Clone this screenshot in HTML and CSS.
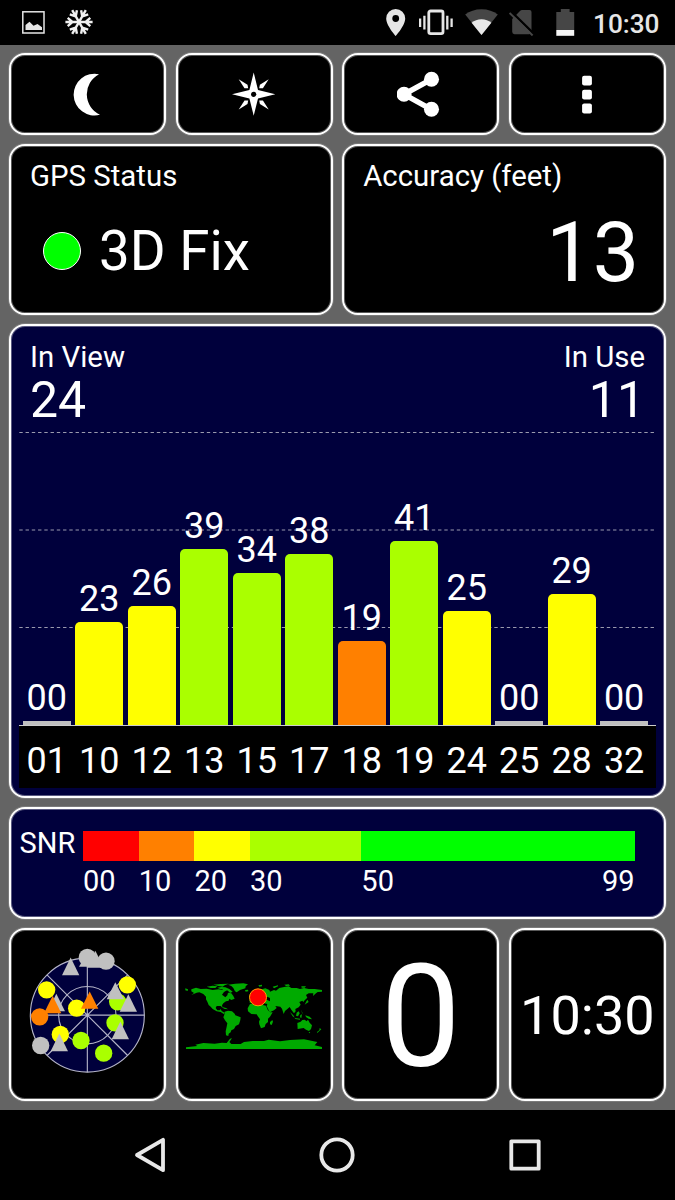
FILE: index.html
```html
<!DOCTYPE html>
<html lang="en">
<head>
    <meta charset="UTF-8">
    <meta name="viewport" content="width=device-width, initial-scale=1.0">
    <title>GPS Status</title>
    <link rel="stylesheet" href="styles.css">
</head>
<body>
    <header class="statusbar">
        <svg class="icon picture" width="23" height="23" viewBox="0 0 23 23">
            <rect x="0.8" y="0.8" width="21.2" height="21.2" fill="none" stroke="#e6e6e6" stroke-width="1.5"/>
            <path d="M3.5 19V14L7.5 10.8L11.5 14.8L15.5 13L20 16.3V19Z" fill="#e6e6e6"/>
        </svg>
        <svg class="icon snow" width="28" height="26" viewBox="-14 -13 28 26">
            <g fill="none" stroke="#f0f0f0" stroke-width="2.4">
                <path d="M-13.6 0H13.6M-11.3 -4.1L-6.5 0L-11.3 4.1M11.3 -4.1L6.5 0L11.3 4.1"/>
                <path transform="rotate(60)" d="M-13.6 0H13.6M-11.3 -4.1L-6.5 0L-11.3 4.1M11.3 -4.1L6.5 0L11.3 4.1"/>
                <path transform="rotate(120)" d="M-13.6 0H13.6M-11.3 -4.1L-6.5 0L-11.3 4.1M11.3 -4.1L6.5 0L11.3 4.1"/>
            </g>
        </svg>
        <svg class="icon pin" width="20" height="27" viewBox="0 0 20 27">
            <path d="M9.7 0A9.5 9.5 0 0 0 0.2 9.5C0.2 16.5 9.7 27 9.7 27S19.2 16.5 19.2 9.5A9.5 9.5 0 0 0 9.7 0ZM9.7 6.1A3.4 3.4 0 1 1 9.7 12.9A3.4 3.4 0 0 1 9.7 6.1Z" fill="#e6e6e6" fill-rule="evenodd"/>
        </svg>
        <svg class="icon vibrate" width="34" height="27" viewBox="0 0 34 27">
            <rect x="9.8" y="2" width="14.2" height="22.6" rx="1.8" fill="none" stroke="#e6e6e6" stroke-width="2.8"/>
            <path d="M1.1 9.5V18M5.4 6.7V20.5M28.3 6.7V20.5M32.6 9.5V18" stroke="#e6e6e6" stroke-width="2.3"/>
        </svg>
        <svg class="icon wifi" width="33" height="26" viewBox="0 0 33 26">
            <path d="M16.5 26L0.2 5.6C4.5 2.1 10 0.2 16.5 0.2S28.5 2.1 32.8 5.6Z" fill="#464646"/>
            <path d="M16.5 26L6.6 13.7C9.4 11.5 12.5 10.3 16.5 10.3S23.6 11.5 26.4 13.7Z" fill="#e8e8e8"/>
        </svg>
        <svg class="icon sim" width="26" height="27" viewBox="0 0 26 27">
            <path d="M9.5 3.5L11 1.9Q12 1 13 1H20.5Q22.5 1 22.5 3V22.8Q22.5 25.2 20.2 25.2H5.5Q3.2 25.2 3.2 22.8V10Z" fill="#464646"/>
            <path d="M2.2 2.6L24.9 24.8" stroke="#000" stroke-width="2.4"/>
            <path d="M0.6 3.9L23.6 26.4" stroke="#464646" stroke-width="2"/>
        </svg>
        <svg class="icon battery" width="19" height="27" viewBox="0 0 19 27">
            <path d="M0.3 3H4.8V0H13.6V3H18.2V21H0.3Z" fill="#464646"/>
            <rect x="0.3" y="21" width="17.9" height="5.8" fill="#f4f4f4"/>
        </svg>
        <span class="clock">10:30</span>
    </header>

    <main class="dashboard">
        <button class="card tool">
            <svg width="48" height="48" viewBox="0 0 48 48">
                <path d="M35 4.2A20.9 20.9 0 1 0 36 44.8A22.6 22.6 0 0 1 35 4.2Z" fill="#fff"/>
            </svg>
        </button>
        <button class="card tool">
            <svg width="48" height="48" viewBox="-24 -24 48 48">
                <g fill="#fff">
                    <path d="M-0.3 -21.5L4 -4L21.3 0.3L4 4.6L-0.3 21.8L-4.6 4.6L-22 0.3L-4.6 -4Z"/>
                    <path d="M-15.3 -14.8L-6.5 -9.3L-5.8 -5.8L-9.5 -5.8Z"/>
                    <path d="M14.7 -14.8L5.9 -9.3L5.2 -5.8L8.9 -5.8Z"/>
                    <path d="M-15.3 15.4L-6.5 9.9L-5.8 6.4L-9.5 6.4Z"/>
                    <path d="M14.7 15.4L5.9 9.9L5.2 6.4L8.9 6.4Z"/>
                </g>
                <circle cx="-0.3" cy="0.3" r="2.6" fill="#000"/>
            </svg>
        </button>
        <button class="card tool">
            <svg width="48" height="48" viewBox="0 0 48 48">
                <path d="M34.3 9.3L7 24.3L34.3 39.3" fill="none" stroke="#fff" stroke-width="5.4"/>
                <circle cx="7" cy="24.3" r="7.5" fill="#fff"/>
                <circle cx="34.5" cy="9.3" r="7.5" fill="#fff"/>
                <circle cx="34.5" cy="39.3" r="7.5" fill="#fff"/>
            </svg>
        </button>
        <button class="card tool">
            <svg width="48" height="48" viewBox="0 0 48 48">
                <g fill="#fff">
                    <rect x="19.1" y="5.8" width="9.8" height="9.8" rx="2"/>
                    <rect x="19.1" y="19.7" width="9.8" height="9.8" rx="2"/>
                    <rect x="19.1" y="33.6" width="9.8" height="9.8" rx="2"/>
                </g>
            </svg>
        </button>

        <section class="card half">
            <div class="label">GPS Status</div>
            <div class="fix"><span class="led"></span>3D Fix</div>
        </section>
        <section class="card half">
            <div class="label">Accuracy (feet)</div>
            <div class="accuracy">13</div>
        </section>

        <section class="card full signal">
            <div class="counts">
                <div>
                    <div class="label">In View</div>
                    <div class="count">24</div>
                </div>
                <div class="right">
                    <div class="label">In Use</div>
                    <div class="count">11</div>
                </div>
            </div>
            <div class="plot">
                <svg class="grid" width="637" height="300" viewBox="0 0 637 300">
                    <path d="M0.3 6.5H635M0.3 104H635M0.3 201.5H635" stroke="#9a9aae" stroke-width="1.2" stroke-dasharray="3.4 2.85"/>
                </svg>
                <div class="bar"><span>00</span><i class="none" style="height: 4.5px"></i></div>
                <div class="bar"><span>23</span><i class="yellow" style="height: 103px"></i></div>
                <div class="bar"><span>26</span><i class="yellow" style="height: 119px"></i></div>
                <div class="bar"><span>39</span><i class="lime" style="height: 176.5px"></i></div>
                <div class="bar"><span>34</span><i class="lime" style="height: 152.5px"></i></div>
                <div class="bar"><span>38</span><i class="lime" style="height: 171.5px"></i></div>
                <div class="bar"><span>19</span><i class="orange" style="height: 84px"></i></div>
                <div class="bar"><span>41</span><i class="lime" style="height: 184.5px"></i></div>
                <div class="bar"><span>25</span><i class="yellow" style="height: 114px"></i></div>
                <div class="bar"><span>00</span><i class="none" style="height: 4.5px"></i></div>
                <div class="bar"><span>29</span><i class="yellow" style="height: 131.5px"></i></div>
                <div class="bar"><span>00</span><i class="none" style="height: 4.5px"></i></div>
            </div>
            <div class="prn">
                <span>01</span><span>10</span><span>12</span><span>13</span><span>15</span><span>17</span>
                <span>18</span><span>19</span><span>24</span><span>25</span><span>28</span><span>32</span>
            </div>
        </section>

        <section class="card full snr">
            <div class="snr-name">SNR</div>
            <div class="scale">
                <div class="step s00"><i class="red"></i>00</div>
                <div class="step s10"><i class="orange"></i>10</div>
                <div class="step s20"><i class="yellow"></i>20</div>
                <div class="step s30"><i class="lime"></i>30</div>
                <div class="step s50"><i class="green"></i><span>50</span><span>99</span></div>
            </div>
        </section>

        <section class="card tile">
            <svg width="140" height="140" viewBox="-6 14.5 420 420">
                <circle cx="202" cy="225" r="171" fill="#00003c"/>
                <g fill="none" stroke="#b4b4c8" stroke-width="3.4">
                    <circle cx="202" cy="225" r="171"/>
                    <circle cx="202" cy="225" r="86"/>
                    <path d="M202 54V396M31 225H373M81 104L323 346M323 104L81 346"/>
                </g>
                <g fill="#c0c0c0">
                    <path d="M152 52L178 105H126Z"/>
                    <path d="M205 30L231 80H177Z"/>
                    <path d="M226 32L252 83H200Z"/>
                    <circle cx="202" cy="52" r="26"/>
                    <circle cx="258" cy="63" r="26"/>
                    <path d="M109 161L135 213H83Z"/>
                    <circle cx="62" cy="316" r="26"/>
                </g>
                <g fill="#ff0">
                    <circle cx="80" cy="149" r="26"/>
                    <circle cx="322" cy="134" r="26"/>
                    <circle cx="170" cy="204" r="26"/>
                    <circle cx="121" cy="283" r="26"/>
                </g>
                <g fill="#aaff00">
                    <circle cx="293" cy="185" r="26"/>
                    <circle cx="285" cy="248" r="26"/>
                    <circle cx="183" cy="301" r="26"/>
                    <circle cx="251" cy="339" r="26"/>
                </g>
                <g fill="#c0c0c0">
                    <path d="M286 126L312 177H260Z"/>
                    <path d="M325 162L351 215H299Z"/>
                    <path d="M301 244L327 297H275Z"/>
                    <path d="M118 280L144 333H92Z"/>
                </g>
                <g fill="#ff8000">
                    <path d="M98 167L124 219H72Z"/>
                    <path d="M209 154L235 206H183Z"/>
                    <circle cx="59" cy="230" r="26"/>
                </g>
            </svg>
        </section>
        <section class="card tile">
            <svg width="150" height="90" viewBox="-3 0 450 270">
                <g fill="#00aa00">
                    <!-- Americas -->
                    <path d="M34 58L48 53L62 57L80 56L98 60L116 58L126 60L134 54L142 60L132 66L126 74L136 82L142 76L144 68L154 70L160 78L164 86L154 90L148 86L146 92L138 94L130 100L126 106L128 114L122 108L110 108L107 114L112 121L119 121L122 117L125 123L134 128L131 132L122 126L110 124L98 117L92 110L86 105L82 95L78 88L78 80L70 72L58 67L50 68L34 75L42 69L34 64Z"/>
                    <path d="M16 55L24 58L23 63L16 61Z"/>
                    <path d="M80 50L98 47L112 49L106 54L92 54ZM100 44L122 42L146 41L134 46L128 50L112 47ZM112 53L124 51L136 52L148 57L158 65L150 69L144 62L132 58L122 58Z"/>
                    <path d="M144 44L166 41L190 40L204 43L197 49L196 55L180 60L170 67L165 64L160 54L154 48Z"/>
                    <path d="M126 111L138 114L144 118L132 116Z"/>
                    <path d="M134 125L144 122L156 124L164 131L166 136L182 142L181 150L177 163L167 168L162 177L154 181L152 187L146 191L145 198L138 196L137 184L140 170L142 160L135 151L130 142L133 134Z"/>
                    <!-- Africa -->
                    <path d="M210 102L225 99L238 103L258 107L263 119L270 127L278 127L270 140L264 146L264 156L257 162L254 171L243 175L238 163L237 155L240 148L233 138L230 133L214 132L204 124L203 115Z"/>
                    <path d="M277 150L279 155L275 165L270 163L270 156Z"/>
                    <!-- Eurasia -->
                    <path d="M209 98L209 90L218 88L216 83L226 78L235 76L230 68L240 59L256 55L268 60L270 65L282 60L288 62L298 54L316 50L326 49L334 54L350 54L360 57L372 54L386 57L404 57L426 60L426 65L413 66L408 70L399 78L400 70L386 70L378 75L382 83L374 91L370 96L374 101L367 92L358 96L362 104L356 112L346 117L347 124L342 130L334 119L329 111L323 116L315 123L311 132L306 116L301 110L286 108L290 114L282 121L269 127L260 108L262 102L249 99L246 94L252 93L248 88L260 89L270 94L270 84L262 80L256 90L248 98L242 95L239 100L226 90L218 98Z"/>
                    <path d="M208 76L214 74L215 83L207 84ZM195 60L204 59L205 64L197 65ZM235 46L246 44L246 49L238 50ZM278 50L294 46L294 49L282 55ZM313 44L326 43L330 47L318 48ZM364 49L378 49L374 53L365 53Z"/>
                    <path d="M382 89L386 96L378 101L374 104L378 96ZM330 126L340 136L344 143L338 139ZM350 128L356 124L359 130L354 139L348 137ZM344 144L360 146L360 149L346 147ZM361 135L366 133L364 144L360 142ZM362 117L366 126L371 134L366 128ZM376 136L389 140L396 148L386 146L378 141Z"/>
                    <!-- Oceania -->
                    <path d="M352 159L362 155L367 150L374 149L380 154L384 149L389 158L396 166L393 177L387 183L378 179L371 174L353 177Z"/>
                    <path d="M386 186L391 186L388 190ZM419 174L424 178L412 189L411 186L418 181Z"/>
                    <!-- Antarctica -->
                    <path d="M18 232L52 228L46 224L70 219L104 221L126 218L140 219L150 206L156 205L148 216L154 222L182 222L192 216L218 213L252 213L266 209L300 214L330 210L372 208L412 216L404 226L426 231V237H18Z"/>
                </g>
                <circle cx="234" cy="82" r="25.5" fill="#f00" stroke="#ff9d00" stroke-width="3"/>
            </svg>
        </section>
        <section class="card tile speed">0</section>
        <section class="card tile time">10:30</section>
    </main>

    <nav class="navbar">
        <svg width="40" height="40" viewBox="0 0 40 40">
            <path d="M33 4.8V35.2L7 20Z"/>
        </svg>
        <svg width="40" height="40" viewBox="0 0 40 40">
            <circle cx="20" cy="20" r="15.7"/>
        </svg>
        <svg width="40" height="40" viewBox="0 0 40 40">
            <rect x="6.3" y="6.3" width="27.4" height="27.4"/>
        </svg>
    </nav>
</body>
</html>
```

FILE: styles.css
```css
* {
    margin: 0;
    padding: 0;
    box-sizing: border-box;
}

body {
    width: 675px;
    height: 1200px;
    display: flex;
    flex-direction: column;
    background-color: #000;
    color: #fff;
    font-family: Roboto, sans-serif;
    overflow: hidden;
}

svg {
    display: block;
    flex: none;
}

/* status bar */
.statusbar {
    height: 45px;
    display: flex;
    align-items: flex-start;
    padding: 9px 0 0 22px;
}

.picture {
    margin-top: 2px;
}

.snow {
    margin-left: 20px;
    overflow: visible;
}

.pin {
    margin-left: 293px;
}

.vibrate {
    margin-left: 13px;
}

.wifi {
    margin-left: 12px;
}

.sim {
    margin-left: 11px;
}

.battery {
    margin-left: 21px;
}

.clock {
    margin-left: 18px;
    font-size: 26.2px;
    font-weight: 500;
    line-height: 30px;
    color: #e6e6e6;
}

/* dashboard */
.dashboard {
    height: 1065px;
    display: grid;
    grid-template-columns: repeat(4, 1fr);
    grid-template-rows: 82px 171px 474px 112px 173px;
    gap: 9px 9.3px;
    padding: 8px 9px 9px;
    background-color: #646464;
}

.card {
    min-width: 0;
    border: 2px solid #fff;
    border-radius: 16px;
    box-shadow: 0 0 0 1px rgba(255, 255, 255, 0.15), inset 0 0 0 1px rgba(255, 255, 255, 0.35);
    background-color: #000;
    color: #fff;
    font-family: inherit;
    overflow: hidden;
}

.half {
    grid-column: span 2;
    padding: 14px 25px 0 19px;
}

.full {
    grid-column: span 4;
    background-color: #00003c;
}

.tool, .tile {
    display: flex;
    justify-content: center;
    align-items: center;
}

.label {
    font-size: 29.4px;
    line-height: 32px;
}

.fix {
    display: flex;
    align-items: center;
    margin-top: 29px;
    font-size: 54.7px;
    line-height: 60px;
}

.led {
    width: 38px;
    height: 38px;
    margin: 0 18px 0 13px;
    border: 1px solid #fff;
    border-radius: 50%;
    background-color: #0f0;
}

.accuracy {
    margin-top: 16px;
    font-size: 82.5px;
    line-height: 90px;
    text-align: right;
}

/* signal chart */
.signal {
    padding: 15px 8px 0;
}

.counts {
    display: flex;
    justify-content: space-between;
    padding: 0 11px;
}

.right {
    text-align: right;
}

.count {
    margin-top: 2px;
    font-size: 50px;
    line-height: 51px;
}

.plot {
    position: relative;
    height: 300px;
    display: flex;
    align-items: flex-end;
    gap: 4.3px;
    padding-left: 3.7px;
    border-bottom: 1px solid #ccc;
}

.grid {
    position: absolute;
    left: 0;
    top: 0;
}

.bar {
    position: relative;
    width: 48.2px;
    font-size: 36px;
    line-height: 36px;
    text-align: center;
}

.bar span {
    display: block;
    margin-bottom: 5px;
}

.bar i {
    display: block;
    border-radius: 5px 5px 0 0;
}

.bar .none {
    border-radius: 0;
}

.prn {
    height: 62px;
    display: flex;
    gap: 4.3px;
    padding-left: 3.7px;
    background-color: #000;
    font-size: 36px;
    line-height: 71px;
    text-align: center;
}

.prn span {
    width: 48.2px;
}

.none {
    background-color: #c0c0c0;
}

.red {
    background-color: #f00;
}

.orange {
    background-color: #ff8000;
}

.yellow {
    background-color: #ff0;
}

.lime {
    background-color: #aaff00;
}

.green {
    background-color: #0f0;
}

/* snr scale */
.snr {
    display: flex;
    padding: 22px 29.5px 0 8.5px;
    font-size: 29px;
}

.snr-name {
    width: 63.5px;
    line-height: 24px;
}

.scale {
    flex: 1;
    display: flex;
}

.step {
    line-height: 40px;
}

.step i {
    display: block;
    height: 30px;
}

.s00, .s10, .s20 {
    width: 55.7px;
}

.s30 {
    width: 111.3px;
}

.s50 {
    flex: 1;
    display: flex;
    flex-wrap: wrap;
    align-content: flex-start;
    justify-content: space-between;
}

.s50 i {
    width: 100%;
}

.speed {
    padding-top: 4px;
    font-size: 143px;
}

.time {
    padding-top: 2px;
    font-size: 54px;
}

/* navigation bar */
.navbar {
    height: 90px;
    display: flex;
    justify-content: space-around;
    align-items: center;
    padding: 0 56px;
}

.navbar svg {
    fill: none;
    stroke: #e8e8e8;
    stroke-width: 3.8;
    stroke-linejoin: round;
}
```
